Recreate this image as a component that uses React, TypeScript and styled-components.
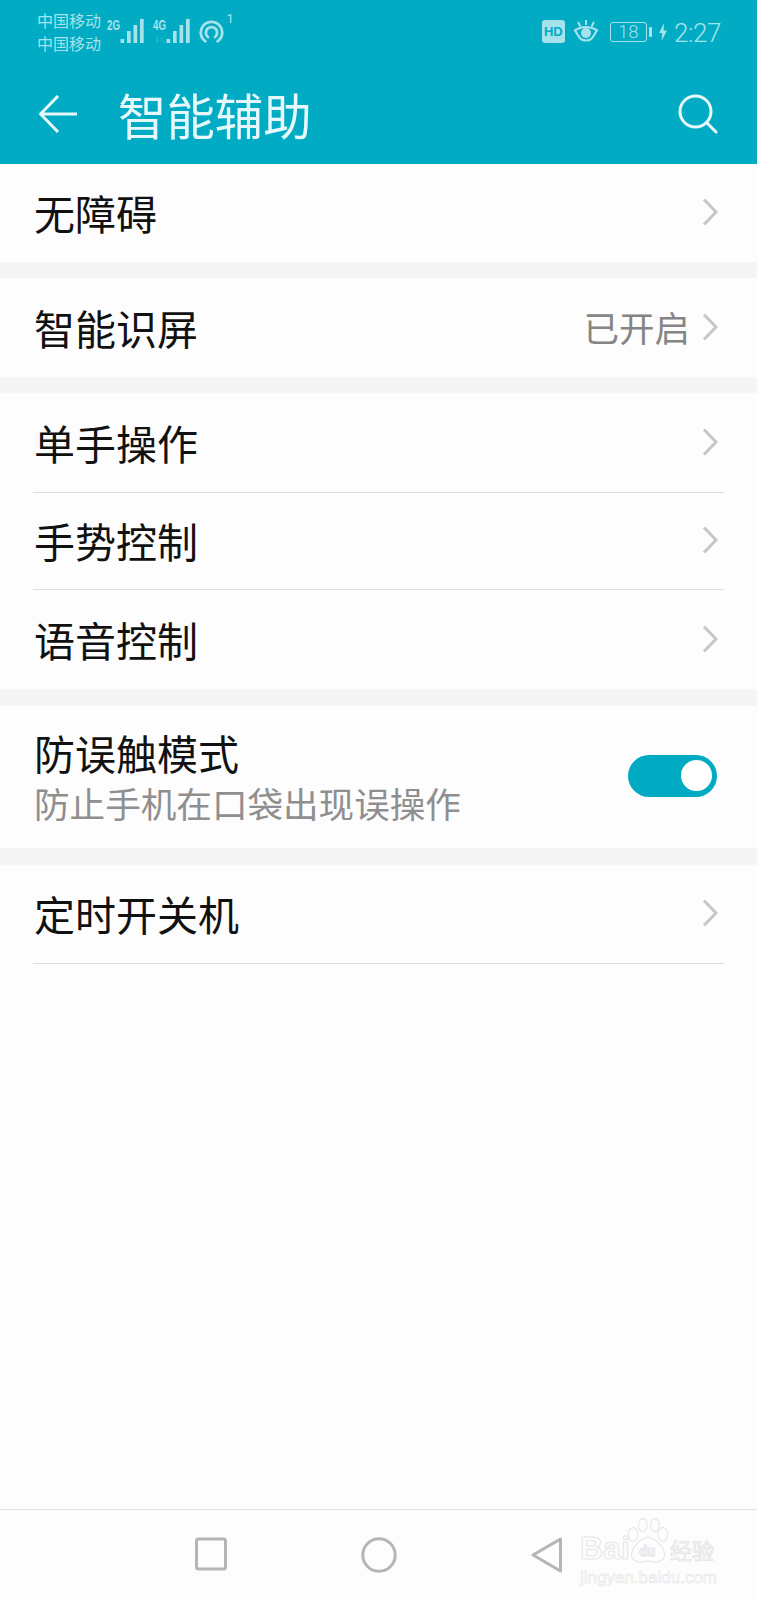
import styled, { createGlobalStyle } from 'styled-components'

const TEAL = '#00abc3'
const STATUS = '#a6e2ec'

const GlobalStyle = createGlobalStyle`
  html, body {
    margin: 0;
    padding: 0;
    background: #fdfdfd;
  }
  * {
    box-sizing: border-box;
  }
`

const Screen = styled.div`
  width: 757px;
  height: 1600px;
  display: flex;
  flex-direction: column;
  background: #fdfdfd;
  font-family: 'Noto Sans CJK SC', 'Noto Sans', sans-serif;
  overflow: hidden;
`

const TopArea = styled.header`
  height: 164px;
  background: ${TEAL};
  display: flex;
  flex-direction: column;
`

const StatusBar = styled.div`
  height: 64px;
  padding: 9px 36px 0 37px;
  display: flex;
  justify-content: space-between;
  align-items: flex-start;
  color: ${STATUS};
`

const StatusLeft = styled.div`
  display: flex;
  align-items: flex-start;
`

const Carriers = styled.div`
  width: 70px;
  font-size: 16px;
  line-height: 23px;
`

const NetworkIcon = styled.svg<{ $top: number }>`
  display: block;
  margin-top: ${(p) => p.$top}px;
`

const StatusRight = styled.div`
  display: flex;
  align-items: flex-start;
  gap: 8px;
  padding-top: 11px;
`

const HdBadge = styled.div`
  width: 23px;
  height: 23px;
  border-radius: 3px;
  background: ${STATUS};
  color: ${TEAL};
  font-family: 'Liberation Sans', sans-serif;
  font-weight: 700;
  font-size: 13px;
  line-height: 23px;
  text-align: center;
`

const Battery = styled.div`
  width: 37px;
  height: 20px;
  margin: 2px 0 0 3px;
  border: 1px solid ${STATUS};
  border-radius: 3px;
  font-family: 'Roboto', sans-serif;
  font-weight: 300;
  font-size: 18.5px;
  line-height: 18px;
  text-align: center;
  position: relative;

  &::after {
    content: '';
    position: absolute;
    right: -6px;
    top: 4px;
    width: 3px;
    height: 10px;
    background: ${STATUS};
    border-radius: 1px;
  }
`

const Clock = styled.div`
  font-family: 'Roboto', sans-serif;
  font-weight: 300;
  font-size: 26px;
  line-height: 26px;
  letter-spacing: -0.4px;
  margin-left: -1px;
`

const TitleBar = styled.div`
  height: 100px;
  padding: 0 39px;
  display: flex;
  align-items: center;
  color: #e6f8fb;
`

const Title = styled.h1`
  margin: 0 0 0 41px;
  flex: 1;
  font-size: 48.4px;
  font-weight: 400;
  line-height: 64px;
`

const Band = styled.div<{ $size: number }>`
  height: ${(p) => p.$size}px;
  background: #f5f5f5;
`

const Row = styled.div<{ $height: number }>`
  height: ${(p) => p.$height}px;
  padding: 0 39px 0 34px;
  display: flex;
  align-items: center;
`

const RowDivider = styled.div`
  height: 1px;
  margin: 0 33px;
  background: #dedede;
`

const RowText = styled.div`
  flex: 1;
  margin-bottom: 2px;
`

const RowTitle = styled.div`
  font-size: 41px;
  line-height: 50px;
  color: #111;
`

const RowSub = styled.div`
  margin: 2px 0 -2px;
  font-size: 35.6px;
  line-height: 48px;
  color: #8f8f8f;
`

const RowValue = styled.span`
  font-size: 35.5px;
  color: #858585;
  margin: 0 12px 2px 0;
`

const Toggle = styled.div`
  width: 89px;
  height: 42px;
  margin: 0 1px 2px 0;
  padding: 5px;
  border-radius: 21px;
  background: ${TEAL};
  display: flex;
  justify-content: flex-end;
`

const Knob = styled.div`
  width: 31px;
  height: 31px;
  border-radius: 50%;
  background: #fff;
`

const Spacer = styled.div`
  flex: 1;
`

const NavBar = styled.nav`
  height: 91px;
  border-top: 1px solid #e2e2e2;
  padding-top: 27px;
  display: flex;
  align-items: flex-start;
  justify-content: center;
  gap: 134px;
  position: relative;
`

const NavIcon = styled.svg`
  display: block;
`

const Watermark = styled.div`
  position: absolute;
  left: 579px;
  top: 3px;
  width: 145px;
  height: 80px;
  color: #fdfdfd;
  -webkit-text-stroke: 1px #e6e6e6;
`

const WatermarkLogo = styled.span`
  position: absolute;
  left: 1px;
  top: 17px;
  font-family: 'Liberation Sans', sans-serif;
  font-weight: 700;
  font-size: 32px;
  line-height: 36px;
`

const WatermarkCn = styled.span`
  position: absolute;
  left: 91px;
  top: 21px;
  font-size: 22px;
  line-height: 30px;
  white-space: nowrap;
`

const WatermarkUrl = styled.span`
  position: absolute;
  left: 1px;
  top: 55px;
  font-family: 'Liberation Sans', sans-serif;
  font-size: 17px;
  line-height: 20px;
  -webkit-text-stroke: 0.6px #e6e6e6;
  white-space: nowrap;
`

const Chevron = () => (
  <svg width="16" height="28" viewBox="0 0 16 28" fill="none" style={{ display: 'block', marginBottom: 2 }}>
    <path d="M2 1.5 L14 14 L2 26.5" stroke="#c6c6c6" strokeWidth="3" strokeLinejoin="miter" />
  </svg>
)

const Signal = ({ label, extra }: { label: string; extra?: boolean }) => (
  <NetworkIcon $top={4} width="46" height="32" viewBox="0 -6 46 32">
    <text
      x="0"
      y="11"
      fontFamily="'Liberation Sans', sans-serif"
      fontSize="15"
      fontWeight="700"
      fill={STATUS}
      textLength="13"
      lengthAdjust="spacingAndGlyphs"
    >
      {label}
    </text>
    {extra && (
      <text x="2" y="23" fontFamily="'Liberation Sans', sans-serif" fontSize="8" fill={STATUS} opacity="0.4">
        1↑
      </text>
    )}
    <g fill={STATUS}>
      <rect x="13.5" y="20" width="3.7" height="4" />
      <rect x="20" y="12" width="3.7" height="12" />
      <rect x="26.5" y="6" width="3.7" height="18" />
      <rect x="33" y="0" width="3.7" height="24" />
    </g>
  </NetworkIcon>
)

const Hotspot = () => (
  <NetworkIcon $top={0} width="34" height="35" viewBox="0 -5 34 35">
    <g fill="none" stroke={STATUS} strokeWidth="2.8" strokeLinecap="round">
      <path d="M6.4 27.3 A10.7 10.7 0 1 1 18.6 27.3" />
      <path d="M9 23 A5.6 5.6 0 1 1 16 23" />
    </g>
    <text x="27.5" y="9" fontFamily="'Roboto', sans-serif" fontSize="13" fill={STATUS}>
      1
    </text>
  </NetworkIcon>
)

const Eye = () => (
  <svg width="26" height="22" viewBox="0 0 26 22" fill="none" style={{ display: 'block' }}>
    <path d="M2 10.5 C7 18 7 20.5 13 20.5 C19 20.5 19 18 24 10.5 C18 6 8 6 2 10.5 Z" stroke={STATUS} strokeWidth="2.2" />
    <circle cx="13" cy="13" r="5" fill={STATUS} />
    <path d="M13 0 V5 M5 2 L7.5 6.5 M21 2 L18.5 6.5" stroke={STATUS} strokeWidth="2" />
  </svg>
)

const Bolt = () => (
  <svg width="8" height="18" viewBox="0 0 8 18" style={{ display: 'block', margin: '3px 0 0 4px' }}>
    <path d="M5 0 L0 10 H3.2 L2.6 18 L8 7.5 H4.6 Z" fill={STATUS} />
  </svg>
)

const Paw = () => (
  <svg
    width="40"
    height="45"
    viewBox="5 0 46 44"
    preserveAspectRatio="none"
    fill="#fdfdfd"
    stroke="#e6e6e6"
    strokeWidth="1.2"
    style={{ position: 'absolute', left: 49, top: 5 }}
  >
    <ellipse cx="11" cy="16" rx="5.5" ry="6.5" />
    <ellipse cx="22" cy="7" rx="5" ry="6.5" />
    <ellipse cx="36" cy="7" rx="5" ry="6.5" />
    <ellipse cx="45" cy="16" rx="5.5" ry="6.5" />
    <path d="M28 19 C36 19 47 29 47 36 C47 44 34 44 28 42 C22 44 9 44 9 36 C9 29 20 19 28 19 Z" />
    <text x="18" y="37" fontFamily="'Liberation Sans', sans-serif" fontWeight="700" fontSize="15">
      du
    </text>
  </svg>
)

const SimpleRow = ({ title, value, height }: { title: string; value?: string; height: number }) => (
  <Row $height={height}>
    <RowText>
      <RowTitle>{title}</RowTitle>
    </RowText>
    {value && <RowValue>{value}</RowValue>}
    <Chevron />
  </Row>
)

export default function App() {
  return (
    <Screen>
      <GlobalStyle />
      <TopArea>
        <StatusBar>
          <StatusLeft>
            <Carriers>
              中国移动
              <br />
              中国移动
            </Carriers>
            <Signal label="2G" />
            <Signal label="4G" extra />
            <Hotspot />
          </StatusLeft>
          <StatusRight>
            <HdBadge>HD</HdBadge>
            <Eye />
            <Battery>18</Battery>
            <Bolt />
            <Clock>2:27</Clock>
          </StatusRight>
        </StatusBar>
        <TitleBar>
          <svg width="38" height="38" viewBox="0 0 38 38" fill="none" style={{ display: 'block' }}>
            <path d="M19 1 L1.5 19 L19 37 M1.5 19 H38" stroke="#e6f8fb" strokeWidth="3" />
          </svg>
          <Title>智能辅助</Title>
          <svg width="40" height="40" viewBox="0 0 40 40" fill="none" style={{ display: 'block' }}>
            <circle cx="17.5" cy="17.5" r="15.5" stroke="#e6f8fb" strokeWidth="3" />
            <path d="M28.5 28.5 L38 38" stroke="#e6f8fb" strokeWidth="3" strokeLinecap="round" />
          </svg>
        </TitleBar>
      </TopArea>

      <SimpleRow title="无障碍" height={98} />
      <Band $size={16} />
      <SimpleRow title="智能识屏" value="已开启" height={99} />
      <Band $size={16} />
      <SimpleRow title="单手操作" height={99} />
      <RowDivider />
      <SimpleRow title="手势控制" height={96} />
      <RowDivider />
      <SimpleRow title="语音控制" height={99} />
      <Band $size={17} />
      <Row $height={142}>
        <RowText>
          <RowTitle>防误触模式</RowTitle>
          <RowSub>防止手机在口袋出现误操作</RowSub>
        </RowText>
        <Toggle>
          <Knob />
        </Toggle>
      </Row>
      <Band $size={17} />
      <SimpleRow title="定时开关机" height={98} />
      <RowDivider />
      <Spacer />

      <NavBar>
        <NavIcon width="32" height="34" viewBox="0 0 32 34" fill="none">
          <rect x="1.5" y="2" width="29" height="30" rx="2" stroke="#b5b5b5" strokeWidth="3" />
        </NavIcon>
        <NavIcon width="36" height="36" viewBox="0 0 36 36" fill="none">
          <circle cx="18" cy="18" r="16.2" stroke="#b5b5b5" strokeWidth="3" />
        </NavIcon>
        <NavIcon width="32" height="36" viewBox="0 0 32 36" fill="none">
          <path d="M29.5 2 V34 L2 18 Z" stroke="#b5b5b5" strokeWidth="3" strokeLinejoin="round" />
        </NavIcon>
        <Watermark>
          <WatermarkLogo>Bai</WatermarkLogo>
          <Paw />
          <WatermarkCn>经验</WatermarkCn>
          <WatermarkUrl>jingyan.baidu.com</WatermarkUrl>
        </Watermark>
      </NavBar>
    </Screen>
  )
}
